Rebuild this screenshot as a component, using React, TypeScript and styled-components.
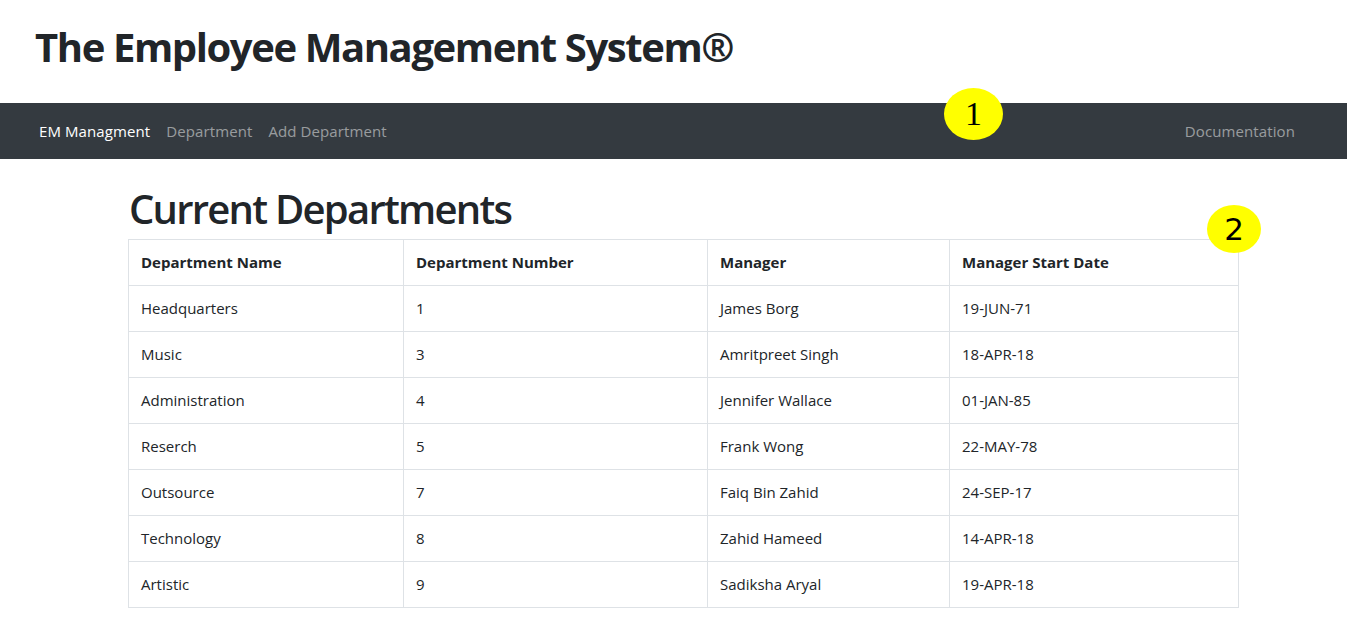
import React from "react";
import styled, { createGlobalStyle } from "styled-components";

const Global = createGlobalStyle`
  html, body { margin: 0; padding: 0; background: #fff; }
  body {
    font-family: "Open Sans", "Noto Sans", "Liberation Sans", sans-serif;
    color: #212529;
    font-size: 16px;
  }
`;

const Page = styled.div`
  position: relative;
  width: 1347px;
  min-height: 630px;
`;

const Header = styled.header`
  padding: 23px 0 32px 35px;
`;

const Title = styled.h1`
  margin: 0;
  font-size: 40px;
  line-height: 48px;
  font-weight: 700;
  letter-spacing: -1.4px;
`;

const NavBar = styled.nav`
  display: flex;
  align-items: center;
  justify-content: space-between;
  height: 56px;
  background: #343a40;
  padding: 0 44px 0 31px;
`;

const NavGroup = styled.div`
  display: flex;
  align-items: center;
`;

const NavLink = styled.a<{ $active?: boolean }>`
  padding: 8px;
  font-size: 15px;
  line-height: 24px;
  letter-spacing: 0.1px;
  text-decoration: none;
  color: ${(p) => (p.$active ? "#ffffff" : "rgba(255,255,255,0.5)")};
  cursor: pointer;
`;

const Main = styled.main`
  width: 1110px;
  margin: 26px 0 0 128px;
`;

const SectionTitle = styled.h2`
  margin: 0 0 6px 1px;
  font-size: 40px;
  line-height: 48px;
  font-weight: 600;
  letter-spacing: -1.75px;
`;

const Table = styled.table`
  width: 1110px;
  border-collapse: collapse;
  table-layout: fixed;
`;

const Th = styled.th<{ $w: number }>`
  box-sizing: border-box;
  width: ${(p) => p.$w}px;
  text-align: left;
  font-weight: 700;
  font-size: 15px;
  line-height: 23px;
  padding: 11px 12px;
  border: 1px solid #dee2e6;
`;

const Td = styled.td`
  font-size: 15px;
  line-height: 23px;
  padding: 11px 12px;
  border: 1px solid #dee2e6;
`;

const Marker = styled.div<{ $x: number; $y: number; $w: number; $h: number; $serif?: boolean }>`
  position: absolute;
  left: ${(p) => p.$x}px;
  top: ${(p) => p.$y}px;
  width: ${(p) => p.$w}px;
  height: ${(p) => p.$h}px;
  border-radius: 50%;
  background: #ffff00;
  display: flex;
  align-items: center;
  justify-content: center;
  font-family: ${(p) => (p.$serif ? '"Liberation Serif", serif' : '"DejaVu Sans", sans-serif')};
  font-size: ${(p) => (p.$serif ? 34 : 31)}px;
  line-height: 1;
  color: #000;
`;

const cols = [
  { label: "Department Name", w: 275 },
  { label: "Department Number", w: 304 },
  { label: "Manager", w: 242 },
  { label: "Manager Start Date", w: 289 },
];

const rows = [
  ["Headquarters", "1", "James Borg", "19-JUN-71"],
  ["Music", "3", "Amritpreet Singh", "18-APR-18"],
  ["Administration", "4", "Jennifer Wallace", "01-JAN-85"],
  ["Reserch", "5", "Frank Wong", "22-MAY-78"],
  ["Outsource", "7", "Faiq Bin Zahid", "24-SEP-17"],
  ["Technology", "8", "Zahid Hameed", "14-APR-18"],
  ["Artistic", "9", "Sadiksha Aryal", "19-APR-18"],
];

export default function App() {
  return (
    <Page>
      <Global />
      <Header>
        <Title>The Employee Management System®</Title>
      </Header>
      <NavBar>
        <NavGroup>
          <NavLink $active>EM Managment</NavLink>
          <NavLink>Department</NavLink>
          <NavLink>Add Department</NavLink>
        </NavGroup>
        <NavGroup>
          <NavLink>Documentation</NavLink>
        </NavGroup>
      </NavBar>
      <Main>
        <SectionTitle>Current Departments</SectionTitle>
        <Table>
          <thead>
            <tr>
              {cols.map((c) => (
                <Th key={c.label} $w={c.w}>
                  {c.label}
                </Th>
              ))}
            </tr>
          </thead>
          <tbody>
            {rows.map((r) => (
              <tr key={r[0]}>
                {r.map((v, i) => (
                  <Td key={i}>{v}</Td>
                ))}
              </tr>
            ))}
          </tbody>
        </Table>
      </Main>
      <Marker $x={944} $y={88} $w={59} $h={52} $serif>
        1
      </Marker>
      <Marker $x={1207} $y={205} $w={54} $h={48}>
        2
      </Marker>
    </Page>
  );
}
